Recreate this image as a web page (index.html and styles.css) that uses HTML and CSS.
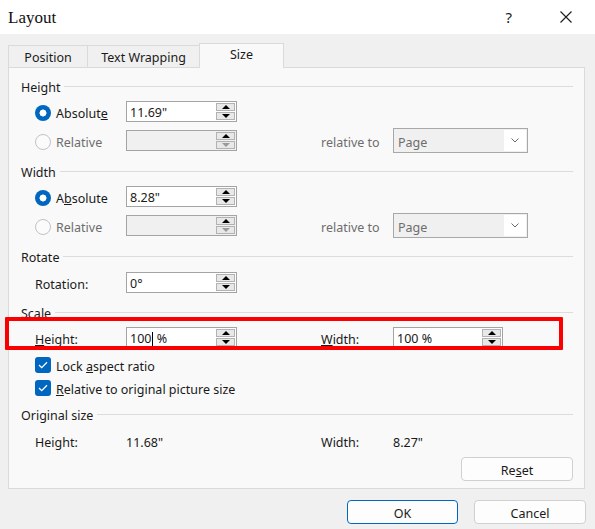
FILE: index.html
```html
<!DOCTYPE html>
<html>
<head>
<meta charset="utf-8">
<link rel="stylesheet" href="styles.css">
</head>
<body>
<div class="dialog">
  <header class="titlebar">
    <span class="title">Layout</span>
    <div class="title-controls">
      <span class="help">?</span>
      <svg class="close" width="12" height="12" viewBox="0 0 12 12"><path d="M0.5 0.5 L11.5 11.5 M11.5 0.5 L0.5 11.5" stroke="#1a1a1a" stroke-width="1.1" fill="none"/></svg>
    </div>
  </header>

  <div class="content">
    <div class="tabs">
      <div class="tab tab-position">Position</div>
      <div class="tab tab-wrap">Text Wrapping</div>
      <div class="tab tab-size active">Size</div>
    </div>

    <div class="panel">
      <div class="group-head"><span>Height</span><i class="rule"></i></div>
      <div class="row r-6">
        <label class="opt"><span class="radio on"></span><span>Absolut<u>e</u></span></label>
        <div class="spin"><span class="val"><span>11.69"</span></span><span class="btns"><b class="up"></b><b class="down"></b></span></div>
      </div>
      <div class="row r-6">
        <label class="opt dis"><span class="radio"></span><span>Relative</span></label>
        <div class="spin disabled"><span class="val"></span><span class="btns"><b class="up"></b><b class="down"></b></span></div>
        <span></span>
        <span class="lbl dis">relative to</span>
        <div class="select"><span class="val">Page</span><span class="arrow"><svg width="8" height="5" viewBox="0 0 8 5"><path d="M0.5 0.5 L4 4 L7.5 0.5" stroke="#6a6a6a" fill="none" stroke-width="1"/></svg></span></div>
      </div>

      <div class="group-head r-11"><span>Width</span><i class="rule"></i></div>
      <div class="row r-6">
        <label class="opt"><span class="radio on"></span><span>A<u>b</u>solute</span></label>
        <div class="spin"><span class="val"><span>8.28"</span></span><span class="btns"><b class="up"></b><b class="down"></b></span></div>
      </div>
      <div class="row r-6">
        <label class="opt dis"><span class="radio"></span><span>Relative</span></label>
        <div class="spin disabled"><span class="val"></span><span class="btns"><b class="up"></b><b class="down"></b></span></div>
        <span></span>
        <span class="lbl dis">relative to</span>
        <div class="select"><span class="val">Page</span><span class="arrow"><svg width="8" height="5" viewBox="0 0 8 5"><path d="M0.5 0.5 L4 4 L7.5 0.5" stroke="#6a6a6a" fill="none" stroke-width="1"/></svg></span></div>
      </div>

      <div class="group-head r-11"><span>Rotate</span><i class="rule"></i></div>
      <div class="row r-7">
        <span class="lbl">Rotation:</span>
        <div class="spin"><span class="val"><span>0°</span></span><span class="btns"><b class="up"></b><b class="down"></b></span></div>
      </div>

      <div class="group-head r-12"><span>Scale</span><i class="rule"></i></div>
      <div class="row r-6">
        <span class="lbl"><u>H</u>eight:</span>
        <div class="spin"><span class="val"><span>100<i class="caret"></i> %</span></span><span class="btns"><b class="up"></b><b class="down"></b></span></div>
        <span></span>
        <span class="lbl"><u>W</u>idth:</span>
        <div class="spin narrow"><span class="val"><span>100 %</span></span><span class="btns"><b class="up"></b><b class="down"></b></span></div>
      </div>
      <label class="check r-9"><span class="box"><svg width="10" height="8" viewBox="0 0 10 8"><path d="M1 4 L3.7 6.6 L9 1.2" stroke="#fff" stroke-width="1.3" fill="none"/></svg></span><span>Lock <u>a</u>spect ratio</span></label>
      <label class="check r-7"><span class="box"><svg width="10" height="8" viewBox="0 0 10 8"><path d="M1 4 L3.7 6.6 L9 1.2" stroke="#fff" stroke-width="1.3" fill="none"/></svg></span><span><u>R</u>elative to original picture size</span></label>

      <div class="group-head r-11"><span>Original size</span><i class="rule"></i></div>
      <div class="row orig r-8">
        <span class="lbl">Height:</span>
        <span class="lbl">11.68"</span>
        <span></span>
        <span class="lbl">Width:</span>
        <span class="lbl">8.27"</span>
      </div>
      <div class="reset-row">
        <button class="btn reset">Re<u>s</u>et</button>
      </div>
    </div>

    <div class="footer">
      <button class="btn ok">OK</button>
      <button class="btn cancel">Cancel</button>
    </div>
  </div>

  <div class="highlight"></div>
</div>
</body>
</html>
```

FILE: styles.css
```css
* { box-sizing: border-box; }

html, body {
  margin: 0;
  padding: 0;
}

body {
  width: 595px;
  height: 529px;
  background: #f0f0f0;
  font-family: "Noto Sans", "Open Sans", sans-serif;
  font-size: 12.5px;
  color: #1a1a1a;
  overflow: hidden;
}

.dialog {
  position: relative;
  width: 595px;
  height: 529px;
}

.titlebar {
  height: 34px;
  background: #ffffff;
  display: flex;
  align-items: center;
  justify-content: space-between;
  padding: 0 23px 0 8px;
}

.title {
  font-family: "Liberation Serif", "DejaVu Serif", serif;
  font-size: 17px;
  color: #111;
  padding-top: 1px;
}

.title-controls {
  display: flex;
  align-items: center;
  gap: 48px;
}

.help {
  font-family: "Noto Sans", sans-serif;
  font-size: 15px;
  color: #1a1a1a;
  line-height: 1;
}

.close {
  display: block;
  margin-top: -1px;
}

.content {
  padding: 9px 9px 0 8px;
}

.tabs {
  display: flex;
  align-items: flex-end;
  height: 24px;
}

.tab {
  height: 22px;
  border: 1px solid #dadada;
  border-bottom: none;
  background: #f0f0f0;
  display: flex;
  align-items: center;
  justify-content: center;
  line-height: 1;
  padding-top: 3px;
}

.tab + .tab { margin-left: -1px; }

.tab-position { width: 80px; }
.tab-wrap { width: 113px; }
.tab-size { width: 85px; }

.tab.active {
  height: 25px;
  margin-bottom: -1px;
  background: #f9f9f9;
  position: relative;
  z-index: 1;
  padding-top: 1px;
  padding-bottom: 2px;
}

.panel {
  margin-right: 1px;
  border: 1px solid #dadada;
  background: #f9f9f9;
  padding: 11px 11px 7px 12px;
}

.group-head {
  display: flex;
  align-items: center;
  height: 16px;
  line-height: 16px;
}

.group-head span { padding-top: 1px; }

.group-head .rule {
  flex: 1;
  height: 1px;
  background: #dcdcdc;
  margin-left: 4px;
  margin-top: -2px;
}

.r-6 { margin-top: 6px; }
.r-7 { margin-top: 7px; }
.r-8 { margin-top: 8px; }
.r-9 { margin-top: 9px; }
.r-11 { margin-top: 11px; }
.r-12 { margin-top: 12px; }

.row {
  display: grid;
  grid-template-columns: 91px 111px 84px 72px 135px;
  align-items: center;
  padding-left: 14px;
}

.row.orig { height: 16px; }

.lbl, .opt span:last-child, .check span:last-child {
  padding-top: 3px;
  white-space: nowrap;
}

.dis { color: #6d6d6d; }

.opt {
  display: flex;
  align-items: center;
  gap: 5px;
}

.radio {
  width: 16px;
  height: 16px;
  border-radius: 50%;
  border: 1px solid #c2c2c2;
  background: #fbfbfb;
  flex: none;
  margin-top: 2px;
}

.radio.on {
  border: none;
  background: radial-gradient(circle, #ffffff 0 3.2px, #0067c0 3.8px);
}

.spin {
  height: 21px;
  border: 1px solid #a4a4a4;
  background: #ffffff;
  display: flex;
  align-items: stretch;
}

.spin.narrow { width: 110px; }

.spin.disabled { background: #f0f0f0; }

.spin .val {
  flex: 1;
  padding-left: 3px;
  display: flex;
  align-items: center;
  padding-top: 1px;
  white-space: nowrap;
}

.caret {
  display: inline-block;
  width: 1px;
  height: 14px;
  background: #000;
  vertical-align: -3px;
  margin-left: 1px;
}

.btns {
  width: 20px;
  padding: 1px 1px 1px 0;
  display: flex;
  flex-direction: column;
  gap: 1px;
}

.btns b {
  flex: 1;
  background: #e8e8e8;
  border: 1px solid #b2b2b2;
  display: flex;
  align-items: center;
  justify-content: center;
}

.btns .up::after {
  content: "";
  border-left: 4px solid transparent;
  border-right: 4px solid transparent;
  border-bottom: 4px solid #000;
}

.btns .down::after {
  content: "";
  border-left: 4px solid transparent;
  border-right: 4px solid transparent;
  border-top: 4px solid #000;
}

.spin.disabled .down::after { border-top-color: #9a9a9a; }

.select {
  height: 25px;
  border: 1px solid #a8a8a8;
  background: #f0f0f0;
  display: flex;
  align-items: stretch;
  color: #6d6d6d;
}

.select .val {
  flex: 1;
  padding-left: 4px;
  display: flex;
  align-items: center;
  padding-top: 3px;
}

.select .arrow {
  width: 22px;
  margin: 1px 1px 1px 0;
  background: #ffffff;
  display: flex;
  align-items: center;
  justify-content: center;
}

.check {
  display: flex;
  align-items: center;
  gap: 5px;
  height: 16px;
  margin-left: 14px;
}

.check .box {
  width: 16px;
  height: 16px;
  border-radius: 3px;
  background: #0067c0;
  display: flex;
  align-items: center;
  justify-content: center;
  flex: none;
}

.reset-row {
  display: flex;
  justify-content: flex-end;
  margin-top: 10px;
}

.btn {
  font-family: "Noto Sans", "Open Sans", sans-serif;
  font-size: 12.5px;
  color: #1a1a1a;
  height: 24px;
  border: 1px solid #d0d0d0;
  border-radius: 4px;
  background: #fdfdfd;
  padding: 2px 0 0 0;
  margin: 0;
}

.reset { width: 112px; }

.footer {
  display: flex;
  justify-content: flex-end;
  gap: 16px;
  margin-top: 11px;
}

.ok {
  width: 111px;
  border: 1px solid #0067c0;
}

.cancel { width: 112px; }

.highlight {
  position: absolute;
  left: 5px;
  top: 317px;
  width: 558px;
  height: 33px;
  border: 4px solid #fb0000;
  border-radius: 1px;
  pointer-events: none;
}
```
